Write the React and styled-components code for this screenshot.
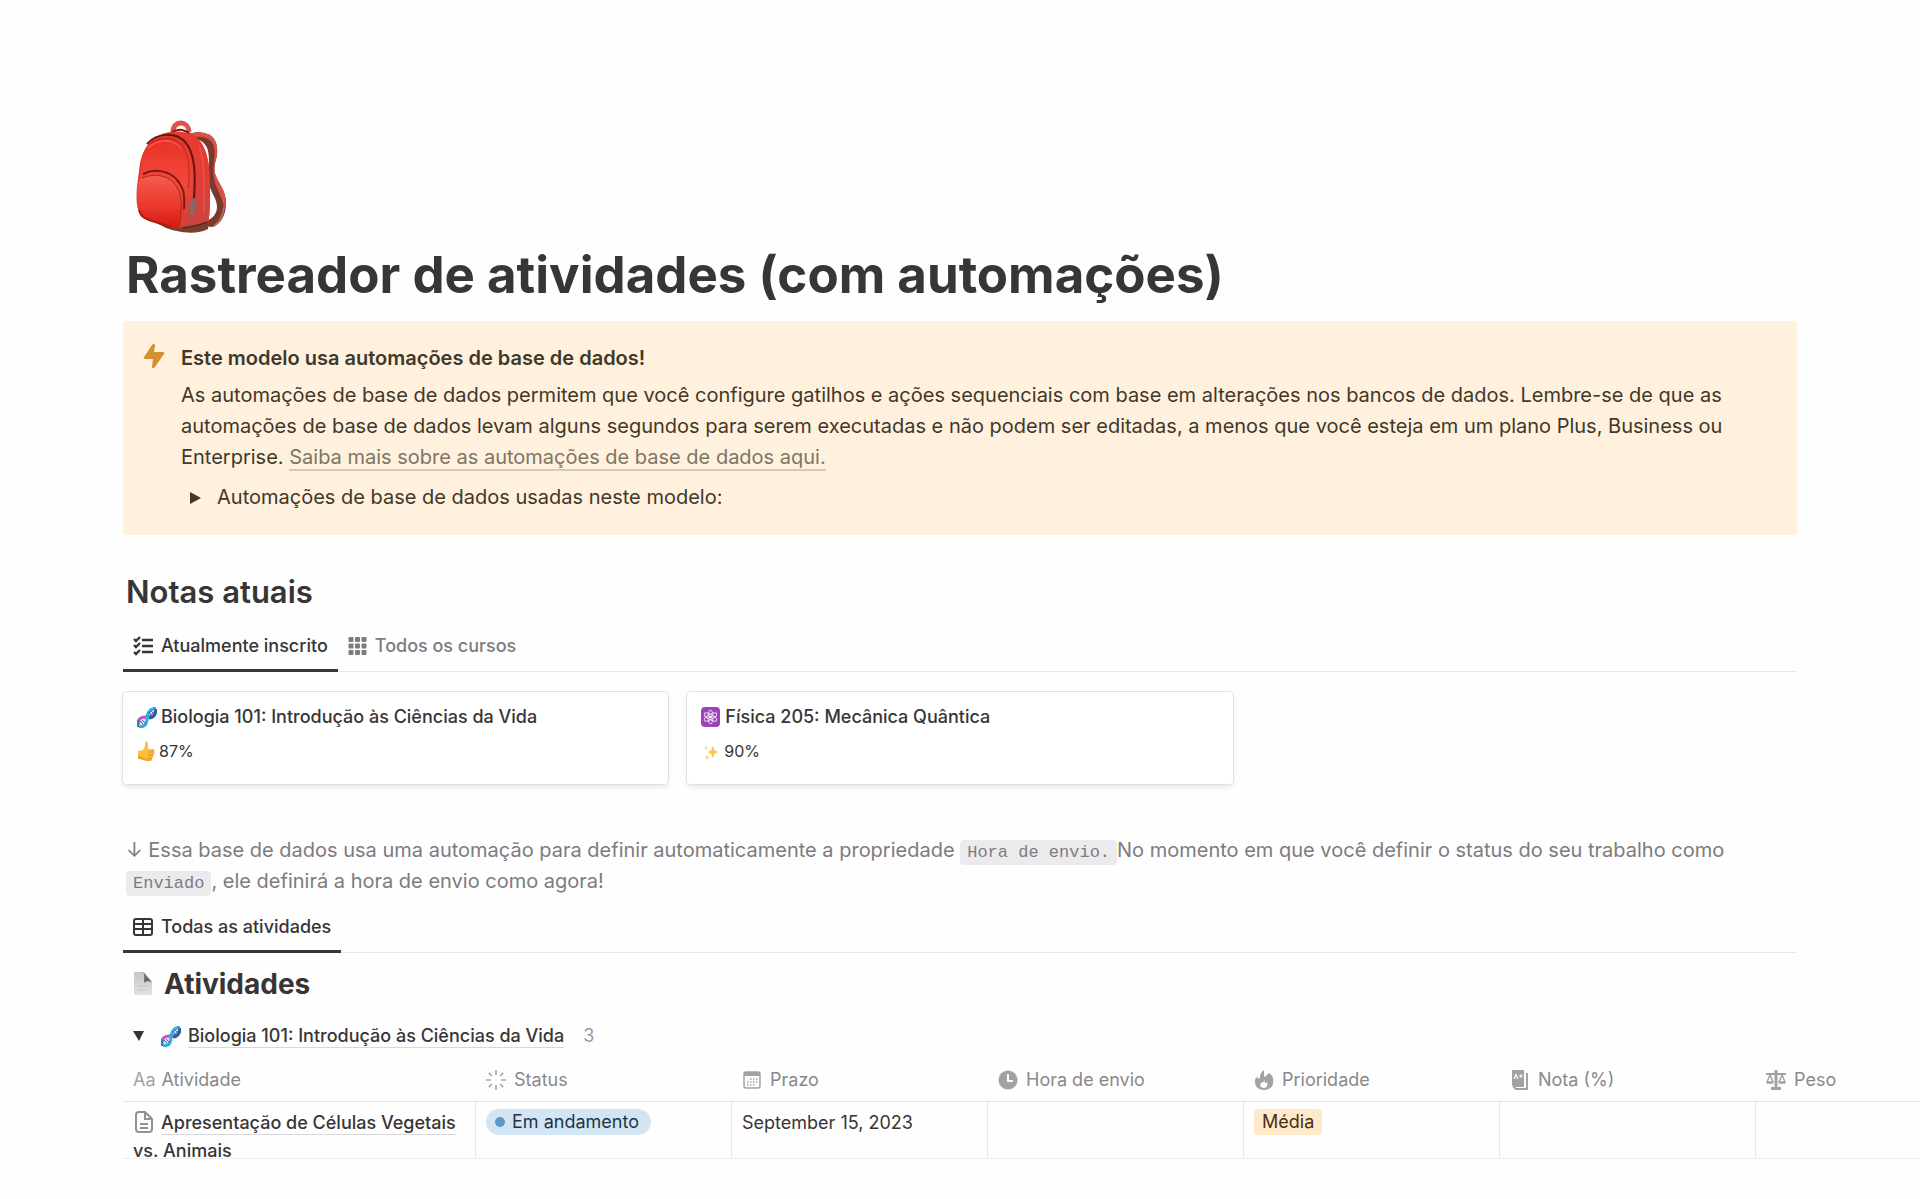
import {createGlobalStyle, styled} from 'styled-components'

const GlobalStyle = createGlobalStyle`
  * {
    box-sizing: border-box;
  }

  body {
    margin: 0;
    background: #fefefe;
    color: #37352f;
    font-family: Inter, 'Liberation Sans', sans-serif;
    overflow-x: hidden;
  }
`

const Page = styled.main`
  padding: 120px 0 40px 123px;
`

const Content = styled.div`
  padding-right: 123px;
`

const PageIcon = styled.svg`
  display: block;
`

const Title = styled.h1`
  margin: 8px 3px 16px;
  font-size: 51px;
  line-height: 61px;
  font-weight: 700;
  color: #373535;
`

const Callout = styled.section`
  display: flex;
  align-items: flex-start;
  gap: 16px;
  padding: 22px 34px 22px 20px;
  border-radius: 4px;
  background: #fff1dd;
  color: #40382b;
  font-size: 20px;
  line-height: 31px;
`

const CalloutBody = styled.div`
  flex: 1;
`

const CalloutTitle = styled.p`
  margin: 0 0 6px;
  font-weight: 600;
`

const CalloutText = styled.p`
  margin: 0 0 9px;
`

const MoreLink = styled.a`
  color: #7d7566;
  text-decoration: none;
  border-bottom: 2px solid #d5cab8;
`

const Toggle = styled.button`
  display: flex;
  align-items: center;
  gap: 16px;
  padding: 0 9px;
  border: 0;
  background: none;
  color: inherit;
  font: inherit;
  cursor: pointer;
`

const SectionTitle = styled.h2`
  margin: 37px 3px 10px;
  font-size: 31px;
  line-height: 40px;
  font-weight: 600;
  color: #373535;
`

const Tabs = styled.div`
  display: flex;
  border-bottom: 1px solid #e9e8ea;
`

const Tab = styled.button`
  display: flex;
  align-items: center;
  gap: 8px;
  height: 50px;
  margin-bottom: -1px;
  padding: 0 10px;
  border: 0;
  border-bottom: 3px solid ${({$active}) => ($active ? '#373535' : 'transparent')};
  background: none;
  color: ${({$active}) => ($active ? '#373535' : '#7d7b7b')};
  font: 500 18px Inter, sans-serif;
  cursor: pointer;
`

const Cards = styled.div`
  display: grid;
  grid-template-columns: repeat(3, 1fr);
  gap: 19px;
  margin: 20px 0 51px;
`

const Card = styled.article`
  display: flex;
  flex-direction: column;
  gap: 9px;
  min-height: 92px;
  padding: 12px 14px;
  border-radius: 4px;
  background: #fff;
  box-shadow: 0 0 0 1px #e2e0e3, 0 3px 5px #e6e5e8;
`

const CardTitle = styled.h3`
  display: flex;
  align-items: center;
  gap: 4px;
  margin: 0;
  font-size: 18px;
  line-height: 26px;
  font-weight: 500;
  color: #373535;
`

const Grade = styled.p`
  display: flex;
  align-items: center;
  gap: 4px;
  margin: 0;
  font-size: 16px;
  line-height: 24px;
  color: #373535;
`

const Note = styled.p`
  margin: 0 3px 6px;
  color: #7d7b7f;
  font-size: 20px;
  line-height: 31px;
`

const Code = styled.code`
  padding: 3px 7px;
  border-radius: 4px;
  background: #ebeaec;
  font: 17px 'Liberation Mono', monospace;
`

const TableTitle = styled.h2`
  display: flex;
  align-items: center;
  gap: 11px;
  margin: 13px 10px 20px;
  font-size: 28px;
  line-height: 36px;
  font-weight: 700;
  color: #373535;
`

const Group = styled.div`
  display: flex;
  align-items: center;
  gap: 7px;
  padding: 0 10px;
  font-size: 18px;
  line-height: 28px;
`

const GroupToggle = styled.button`
  display: flex;
  padding: 0;
  margin-right: 10px;
  border: 0;
  background: none;
  color: #373535;
  cursor: pointer;
`

const PageLink = styled.a`
  color: #373535;
  font-weight: 500;
  text-decoration: underline;
  text-decoration-color: #d9d7da;
  text-decoration-thickness: 1px;
  text-underline-offset: 5px;
`

const Count = styled.span`
  margin-left: 12px;
  color: #9b999b;
`

const TableWrap = styled.div`
  overflow: hidden;
`

const Table = styled.table`
  width: 1889px;
  margin-top: 9px;
  border-collapse: separate;
  border-spacing: 0;
  table-layout: fixed;
  font-size: 18px;
  line-height: 28px;
`

const HeadCell = styled.th`
  width: ${({$wide}) => ($wide ? '353px' : '256px')};
  height: 43px;
  padding: 0 10px;
  border-bottom: 1px solid #e4e2e5;
  color: #8a888b;
  font-weight: 400;
  text-align: left;
`

const HeadLabel = styled.span`
  display: flex;
  align-items: center;
  gap: ${({$wide}) => ($wide ? '6px' : '8px')};

  svg,
  em {
    color: #a3a1a4;
    font-style: normal;
  }
`

const Cell = styled.td`
  padding: 0 10px;
  border-right: 1px solid #e9e8ea;
  border-bottom: 1px solid #efedf0;
  vertical-align: top;
  color: #373535;
`

const CellBody = styled.div`
  height: 56px;
  padding-top: 7px;
  overflow: hidden;

  & > svg {
    margin: 0 8px 0 2px;
    vertical-align: -4px;
  }
`

const Status = styled.span`
  display: inline-flex;
  align-items: center;
  gap: 7px;
  height: 26px;
  padding: 0 12px 0 9px;
  border-radius: 13px;
  background: #d3e5f2;
  color: #1f3547;
  vertical-align: top;

  &:before {
    content: '';
    width: 10px;
    height: 10px;
    border-radius: 50%;
    background: #5b97c7;
  }
`

const Tag = styled.span`
  display: inline-flex;
  align-items: center;
  height: 26px;
  padding: 0 8px;
  border-radius: 4px;
  background: #ffe9c9;
  color: #45300f;
  vertical-align: top;
`

function Backpack() {
  return (
    <PageIcon width="110" height="116" viewBox="0 0 110 116" aria-hidden="true">
      <defs>
        <linearGradient id="bagBody" x1="0" y1="0" x2="1" y2="1">
          <stop offset="0" stopColor="#d92a1e" />
          <stop offset="0.6" stopColor="#ee4438" />
          <stop offset="1" stopColor="#c43a38" />
        </linearGradient>
        <linearGradient id="bagSide" x1="0" y1="0" x2="0" y2="1">
          <stop offset="0" stopColor="#ea3a2e" />
          <stop offset="0.6" stopColor="#dc4038" />
          <stop offset="1" stopColor="#c9433f" />
        </linearGradient>
        <linearGradient id="bagFront" x1="0" y1="0" x2="0" y2="1">
          <stop offset="0" stopColor="#e83226" />
          <stop offset="0.5" stopColor="#f3483c" />
          <stop offset="1" stopColor="#d8352c" />
        </linearGradient>
        <linearGradient id="bagPocket" x1="0" y1="0" x2="0" y2="1">
          <stop offset="0" stopColor="#f65c50" />
          <stop offset="0.6" stopColor="#ea382c" />
          <stop offset="1" stopColor="#d51a0e" />
        </linearGradient>
      </defs>
      {/* shoulder strap */}
      <path d="M66 14c8-3 15-2 21 1 6 4 8 11 7 20-2 9-4 14-1 21 3 8 10 15 10 27 0 13-6 22-14 24l-7-1 1-5c7-2 11-8 11-14 0-9-7-15-8-24-1-13 2-30-3-37-3-5-8-7-14-8z" fill="#7b392c" />
      <path d="M66 14c8-3 15-2 21 1 6 4 8 11 7 20-2 9-4 14-1 21 3 8 10 15 10 27l-2 6c-1-12-8-20-10-30-2-12 2-22 0-32-2-9-11-11-21-10z" fill="#d4544c" />
      <path d="M91 106c6-4 9-10 10-19" fill="none" stroke="#b56a55" strokeWidth="2" />
      {/* handle */}
      <path d="M50 12C50 0 65 0 66 12" fill="none" stroke="#dd5150" strokeWidth="5" />
      <path d="M53 9c2-5 9-5 11 1" fill="none" stroke="#f08b89" strokeWidth="1" />
      <path d="M48 13q9-7 19 1" fill="none" stroke="#6d1915" strokeWidth="2" />
      {/* body */}
      <path d="M37 15c10-5 28-5 37 3 7 6 11 18 12 30 1 19 2 39-1 58-8 8-24 7-33 3L20 97c-7-5-7-18-6-31l3-22c2-13 9-24 20-29z" fill="url(#bagBody)" />
      <path d="M50 12c10 0 18 2 24 6 7 6 11 18 12 30 1 19 2 39-1 58l-25 4c7-20 14-45 10-68-3-15-9-25-20-30z" fill="url(#bagSide)" />
      <path d="M57 107c11-1 19-3 29-6l-1 8c-9 5-22 4-31 2-8-1-15-5-22-9z" fill="#7b3f2b" />
      <path d="M60 108c9-1 16-3 25-6" fill="none" stroke="#4f2116" />
      {/* front panel */}
      <path d="M27 24c12-8 28-7 34 4 5 9 6 23 4 36-1 15-4 30-7 44L22 96c-7-7-7-19-6-30l2-21c1-9 4-16 9-21z" fill="url(#bagFront)" />
      <path d="M24 24c10-12 30-12 39-1 8 10 10 27 8 56" fill="none" stroke="#661410" strokeWidth="2" />
      <path d="M27 24c11-8 27-8 34 4 6 11 6 25 4 40" fill="none" stroke="#b92820" strokeWidth="1" />
      <path d="M25 28c10-10 27-9 33 1" fill="none" stroke="#f9736a" strokeWidth="1" />
      <path d="M76 25c5 14 6 34 5 68" fill="none" stroke="#ef6258" strokeWidth="2" opacity="0.5" />
      {/* pocket */}
      <path d="M20 54c12-6 27-3 34 6 7 8 8 16 7 29" fill="none" stroke="#7d1a13" strokeWidth="2" />
      <path d="M18 58c12-6 26-4 33 5 6 7 8 15 7 28-1 9 0 18-7 17L22 98c-6-3-8-14-8-24 0-8 1-13 4-16z" fill="url(#bagPocket)" />
      <path d="M19 58c12-5 25-3 32 5 6 7 8 15 7 28-1 9-1 16-5 17" fill="none" stroke="#b0241c" strokeWidth="1" />
      <path d="M16 90c2 7 5 8 10 10l22 7" fill="none" stroke="#b3190f" strokeWidth="2" />
      <path d="M69 79l4-1c1 6 0 12-3 17l-4-1c-1-5 1-10 3-15z" fill="#806b69" />
    </PageIcon>
  )
}

function Dna() {
  return (
    <svg width="20" height="21" viewBox="0 0 20 21" aria-hidden="true">
      <path d="M9 10c0-6 4-8 10-9 0 6-2 11-8 11-6-1-7 2-9 7-1-6 2-9 7-9z" fill="#d8eefa" />
      <path d="M1 19c0-7 3-9 8-9 0 6-2 9-8 9z" fill="#f3d8f4" />
      <path d="M1 19c-1-7 3-9 8-9s9-1 10-8" fill="none" stroke="#be56c8" strokeWidth="3" />
      <path d="M2 20c6 0 8-3 8-8 0-6 2-10 9-11" fill="none" stroke="#2bb0da" strokeWidth="3" />
      <path d="M12 11c4 0 7-3 7-9" fill="none" stroke="#24658f" strokeWidth="3" />
      <path d="M1 20c0-3 0-4 1-6" fill="none" stroke="#2b7fb0" strokeWidth="2" />
      <path d="M3 14l3 3M5 13l3 3M12 5l3 4M14 4l3 3" stroke="#4c5fae" strokeWidth="1" />
    </svg>
  )
}

function Thumb() {
  return (
    <svg width="18" height="20" viewBox="0 0 18 20" aria-hidden="true">
      <path d="M1 10l5-1c2-2 2-4 2-7 0-2 3-2 3 1v5h5c2 0 2 3 1 3 1 1 1 3-1 3 1 2 0 3-1 3 0 2-1 3-3 3-5 0-6-2-11-2z" fill="#fcc03b" />
      <path d="M11 11h6M11 14h5M11 17h4" stroke="#de8b20" strokeWidth="1" />
      <path d="M1 14v4c4 0 6 2 11 2 2 0 3-1 3-2-5 1-8-2-14-4z" fill="#f3a62c" />
    </svg>
  )
}

function Atom() {
  return (
    <svg width="20" height="20" viewBox="0 0 20 20" aria-hidden="true">
      <rect width="19" height="20" rx="4" fill="#9a44b8" />
      <g fill="none" stroke="#eed9f5" strokeWidth="1">
        <ellipse cx="9.5" cy="10" rx="2.5" ry="7" />
        <ellipse cx="9.5" cy="10" rx="2.5" ry="7" transform="rotate(60 9.5 10)" />
        <ellipse cx="9.5" cy="10" rx="2.5" ry="7" transform="rotate(120 9.5 10)" />
      </g>
      <circle cx="9.5" cy="10" r="1.5" fill="#fff" />
    </svg>
  )
}

function Sparkles() {
  return (
    <svg width="19" height="20" viewBox="0 0 19 20" aria-hidden="true">
      <path d="M12 4c1 5 2 6 6 7-4 1-5 2-6 7-1-5-2-6-6-7 4-1 5-2 6-7z" fill="#fbc64f" />
      <path d="M5 3c0 3 1 3 2 4-1 0-2 1-2 3-1-2-1-3-2-3 1-1 2-1 2-4zM6 14l2 2-2 3-2-3z" fill="#fbd79a" />
    </svg>
  )
}

function Bolt() {
  return (
    <svg width="22" height="26" viewBox="0 0 22 26" aria-hidden="true">
      <path d="M9 2c1-2 4-1 3 1l-1 6h9c1 0 2 1 1 2L12 24c-1 2-4 1-3-1l1-7H2c-1 0-2-1-1-2z" fill="#d3922f" />
    </svg>
  )
}

function Arrow({down}) {
  return (
    <svg width="11" height="12" viewBox="0 0 11 12" aria-hidden="true">
      <path d={down ? 'M0 1h11L6 11z' : 'M0 0v12l11-6z'} fill="currentColor" />
    </svg>
  )
}

function Checklist() {
  return (
    <svg width="20" height="20" viewBox="0 0 20 20" fill="none" stroke="currentColor" strokeWidth="2.4" aria-hidden="true">
      <path d="M9 4h11M9 10h11M9 16h11M1 3l2 2 4-4M1 9l2 2 4-4M1 16l2 2 4-4" />
    </svg>
  )
}

function GridIcon() {
  return (
    <svg width="19" height="18" viewBox="0 0 18 18" fill="currentColor" aria-hidden="true">
      {[0, 6.5, 13].map((y) => [0, 6.5, 13].map((x) => <rect key={`${x}-${y}`} x={x} y={y} width="5" height="5" rx="1" />))}
    </svg>
  )
}

function TableIcon() {
  return (
    <svg width="20" height="18" viewBox="0 0 20 18" fill="none" stroke="currentColor" strokeWidth="2" aria-hidden="true">
      <rect x="1" y="1" width="18" height="16" rx="2" />
      <path d="M1 6h18M1 11h18M10 1v16" />
    </svg>
  )
}

function Sheet() {
  return (
    <svg width="20" height="24" viewBox="0 0 20 24" aria-hidden="true">
      <defs>
        <linearGradient id="sheetFill" x1="0" y1="0" x2="0" y2="1">
          <stop offset="0" stopColor="#c6c5c6" />
          <stop offset="1" stopColor="#e2e1e2" />
        </linearGradient>
      </defs>
      <path d="M1 0h10l8 10v13H1z" fill="url(#sheetFill)" />
      <path d="M10 0l9 10c-3-1-6-1-8 1 0-4 1-8-1-11z" fill="#6d6c6e" />
      <path d="M4 14h11M4 18h9" stroke="#c6c5c7" />
    </svg>
  )
}

function Doc() {
  return (
    <svg width="18" height="22" viewBox="0 0 18 22" fill="none" stroke="#929093" strokeWidth="2" aria-hidden="true">
      <path d="M4 1h6l7 7v10q0 3-3 3H4q-3 0-3-3V4q0-3 3-3zM10 1v7h7M5 13h8M5 17h8" />
    </svg>
  )
}

const headIcons = {
  status: <path d="M10 0v5M10 15v5M0 10h5M15 10h5M3 3l3 3M14 14l3 3M3 17l3-3M14 6l3-3" stroke="currentColor" strokeWidth="1.6" />,
  date: (
    <>
      <rect x="2" y="2" width="16" height="16" rx="2" fill="none" stroke="currentColor" strokeWidth="1.5" />
      <path d="M2 2h16v4H2z" fill="currentColor" />
      <path d="M8 9h8M5 12h11M5 15h8" stroke="currentColor" strokeWidth="1.5" strokeDasharray="1.5 1.5" />
    </>
  ),
  clock: (
    <>
      <circle cx="10" cy="10" r="9.5" fill="currentColor" />
      <path d="M10 4v7h5" fill="none" stroke="#fefefe" strokeWidth="2" />
    </>
  ),
  fire: (
    <>
      <path d="M10 0v6c0 1 2 1 2 0l3-3c4 3 5 6 4 10 0 4-4 7-9 7s-9-3-9-8c0-2 0-4 2-5l2 2c2-2 0-6 5-9z" fill="currentColor" />
      <path d="M10 10c1 1 0 3 2 3l1-1c1 3 0 6-3 6s-5-3-3-5c2-1 3-1 3-3z" fill="#fefefe" />
    </>
  ),
  grade: (
    <>
      <path d="M2 0h12v17H5c-2 0-3-1-3-3z" fill="currentColor" />
      <path d="M17 3v16H6l-3-3" fill="none" stroke="currentColor" strokeWidth="2" />
      <path d="M4 9l2-5 2 5M5 7h2M9 6h4M11 4v4" fill="none" stroke="#fefefe" />
    </>
  ),
  scale: (
    <g fill="none" stroke="currentColor">
      <path d="M10 0v18M5 18.500h10" strokeWidth="3" />
      <path d="M0 4h20" strokeWidth="2" />
      <path d="M4 5l-3 7h6zM16 5l-3 7h6zM1 13h6M13 13h6" strokeWidth="1.5" />
    </g>
  ),
}

const columns = [
  {label: 'Atividade', wide: true},
  {label: 'Status', icon: 'status'},
  {label: 'Prazo', icon: 'date'},
  {label: 'Hora de envio', icon: 'clock'},
  {label: 'Prioridade', icon: 'fire'},
  {label: 'Nota (%)', icon: 'grade'},
  {label: 'Peso', icon: 'scale'},
]

export default function App() {
  return (
    <>
      <GlobalStyle />
      <Page>
        <Content>
          <Backpack />
          <Title>Rastreador de atividades (com automações)</Title>

          <Callout>
            <Bolt />
            <CalloutBody>
              <CalloutTitle>Este modelo usa automações de base de dados!</CalloutTitle>
              <CalloutText>
                As automações de base de dados permitem que você configure gatilhos e ações sequenciais com base em
                alterações nos bancos de dados. Lembre-se de que as automações de base de dados levam alguns segundos
                para serem executadas e não podem ser editadas, a menos que você esteja em um plano Plus, Business ou
                Enterprise. <MoreLink href="#automacoes">Saiba mais sobre as automações de base de dados aqui.</MoreLink>
              </CalloutText>
              <Toggle type="button">
                <Arrow />
                Automações de base de dados usadas neste modelo:
              </Toggle>
            </CalloutBody>
          </Callout>

          <SectionTitle>Notas atuais</SectionTitle>
          <Tabs>
            <Tab type="button" $active>
              <Checklist />
              Atualmente inscrito
            </Tab>
            <Tab type="button">
              <GridIcon />
              Todos os cursos
            </Tab>
          </Tabs>
          <Cards>
            <Card>
              <CardTitle><Dna />Biologia 101: Introdução às Ciências da Vida</CardTitle>
              <Grade><Thumb />87%</Grade>
            </Card>
            <Card>
              <CardTitle><Atom />Física 205: Mecânica Quântica</CardTitle>
              <Grade><Sparkles />90%</Grade>
            </Card>
          </Cards>

          <Note>
            ↓ Essa base de dados usa uma automação para definir automaticamente a propriedade{' '}
            <Code>Hora de envio.</Code>No momento em que você definir o status do seu trabalho como{' '}
            <Code>Enviado</Code>, ele definirá a hora de envio como agora!
          </Note>
          <Tabs>
            <Tab type="button" $active>
              <TableIcon />
              Todas as atividades
            </Tab>
          </Tabs>
          <TableTitle><Sheet />Atividades</TableTitle>
          <Group>
            <GroupToggle type="button" aria-label="Recolher grupo"><Arrow down /></GroupToggle>
            <Dna />
            <PageLink href="#biologia">Biologia 101: Introdução às Ciências da Vida</PageLink>
            <Count>3</Count>
          </Group>
        </Content>

        <TableWrap>
          <Table>
            <thead>
              <tr>
                {columns.map(({label, icon, wide}) => (
                  <HeadCell key={label} $wide={wide} scope="col">
                    <HeadLabel $wide={wide}>
                      {icon ? <svg width="20" height="20" viewBox="0 0 20 20" aria-hidden="true">{headIcons[icon]}</svg> : <em>Aa</em>}
                      {label}
                    </HeadLabel>
                  </HeadCell>
                ))}
              </tr>
            </thead>
            <tbody>
              <tr>
                <Cell>
                  <CellBody>
                    <Doc />
                    <PageLink href="#apresentacao">Apresentação de Células Vegetais vs. Animais</PageLink>
                  </CellBody>
                </Cell>
                <Cell><CellBody><Status>Em andamento</Status></CellBody></Cell>
                <Cell><CellBody>September 15, 2023</CellBody></Cell>
                <Cell />
                <Cell><CellBody><Tag>Média</Tag></CellBody></Cell>
                <Cell />
                <Cell />
              </tr>
            </tbody>
          </Table>
        </TableWrap>
      </Page>
    </>
  )
}
